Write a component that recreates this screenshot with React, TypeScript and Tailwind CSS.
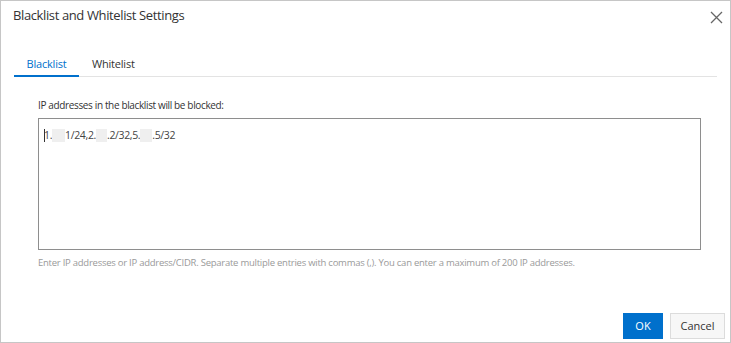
import React from "react";

const Blur = ({ w }: { w: number }) => (
  <span className="inline-block bg-[#efefef] align-middle h-[13px]" style={{ width: w }} />
);

export default function App() {
  const font = { fontFamily: '"Open Sans", "Noto Sans", Arial, sans-serif' };
  return (
    <div className="w-[731px] h-[343px] bg-white border border-[#c6c6c6] flex flex-col text-[#333]" style={font}>
      <div className="h-[30px] flex items-center justify-between pl-[12px] pr-[7px]">
        <span className="text-[13px] tracking-[-0.38px]">Blacklist and Whitelist Settings</span>
        <svg width="13" height="13" viewBox="0 0 13 13" className="mt-[2px]">
          <path d="M1 1 L12 12 M12 1 L1 12" stroke="#666" strokeWidth="1.3" fill="none" />
        </svg>
      </div>
      <div className="mt-[23px] mx-[13px] flex border-b border-[#e3e3e3] text-[11px] h-[23px]">
        <div className="w-[65px] flex justify-center border-b-2 border-[#0070cc] text-[#0070cc] -mb-[1px] pt-[2px] tracking-[-0.2px]">Blacklist</div>
        <div className="px-[13px] pt-[2px] tracking-[-0.2px]">Whitelist</div>
      </div>
      <div className="ml-[37px] mt-[21px] text-[10px] leading-[14px] tracking-[-0.36px]">IP addresses in the blacklist will be blocked:</div>
      <div className="ml-[37px] mt-[6px] w-[663px] h-[132px] border border-[#8e8e8e] pl-[5px] pt-[8px]">
        <div className="flex items-center text-[10.5px] text-[#444] leading-[16px] tracking-[-0.35px]">
          <span className="w-[1px] h-[13px] bg-[#333] -mr-[1px]" />
          <span>1.</span>
          <Blur w={13} />
          <span>1/24,2.</span>
          <Blur w={11} />
          <span>.2/32,5.</span>
          <Blur w={12} />
          <span>.5/32</span>
        </div>
      </div>
      <div className="ml-[37px] mt-[6px] text-[9.5px] leading-[14px] text-[#9a9a9a] tracking-[-0.25px]">
        Enter IP addresses or IP address/CIDR. Separate multiple entries with commas (,). You can enter a maximum of 200 IP addresses.
      </div>
      <div className="flex-1" />
      <div className="flex justify-end gap-[7px] pr-[5px] pb-[3px]">
        <button className="w-[40px] h-[26px] bg-[#0070cc] text-white text-[11px]">OK</button>
        <button className="w-[55px] h-[26px] bg-[#f7f7f7] border border-[#dcdcdc] text-[#333] text-[11px]">Cancel</button>
      </div>
    </div>
  );
}
